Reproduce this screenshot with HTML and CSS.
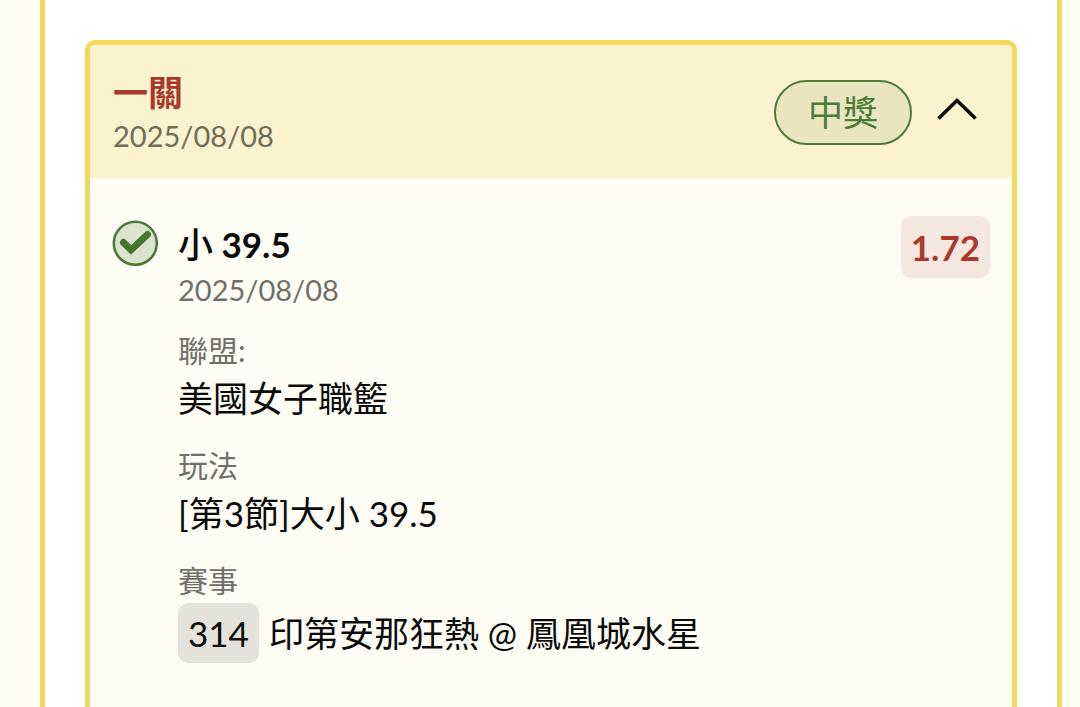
FILE: index.html
```html
<!DOCTYPE html>
<html lang="zh-Hant">
<head>
<meta charset="utf-8">
<meta name="viewport" content="width=device-width, initial-scale=1">
<title>一關 2025/08/08</title>
<link rel="stylesheet" href="styles.css">
</head>
<body>
<main class="panel">
  <article class="ticket">
    <header class="ticket-header">
      <div class="ticket-heading">
        <h1 class="ticket-title">一關</h1>
        <time class="date" datetime="2025-08-08">2025/08/08</time>
      </div>
      <span class="status">中獎</span>
      <button class="toggle" type="button" aria-expanded="true" aria-label="收合">
        <svg class="chevron" viewBox="0 0 40 24" aria-hidden="true"><path d="M1.500 21.500 20 3.500 38.500 21.500"/></svg>
      </button>
    </header>
    <section class="bet">
      <svg class="check" viewBox="0 0 46 46" role="img" aria-label="中獎">
        <circle cx="23.300" cy="23.300" r="21.500"/>
        <path d="M11.500 22.500 19 30 35.500 14.500"/>
      </svg>
      <div class="bet-main">
        <h2 class="bet-title"><span class="pick">小</span> 39.5</h2>
        <time class="date" datetime="2025-08-08">2025/08/08</time>
        <dl class="details">
          <div class="detail"><dt>聯盟:</dt><dd>美國女子職籃</dd></div>
          <div class="detail"><dt>玩法</dt><dd>[第3節]大小 39.5</dd></div>
          <div class="detail"><dt>賽事</dt><dd class="match"><span class="match-number">314</span><span>印第安那狂熱 @ 鳳凰城水星</span></dd></div>
        </dl>
      </div>
      <strong class="odds">1.72</strong>
    </section>
  </article>
</main>
</body>
</html>
```
FILE: styles.css
```css
* {
  box-sizing: border-box;
}

body {
  margin: 0;
  background: #fefdf5;
  color: #0b0b0b;
  font-family: Lato, "Noto Sans CJK TC", sans-serif;
  font-size: 35px;
  line-height: 50px;
}

h1, h2, dl, dd {
  margin: 0;
}

.panel {
  display: flex;
  min-height: 100vh;
  margin: 0 18px 0 40px;
  padding: 40px 40px 0;
  border: solid #f2d95c;
  border-width: 0 5px;
  background: #fff;
}

.ticket {
  flex: 1;
  border: 5px solid #f2d95c;
  border-bottom: 0;
  border-radius: 10px 10px 0 0;
  background: #fefdf5;
}

.ticket-header {
  display: flex;
  align-items: center;
  padding: 21px 30px 20px 23px;
  border-radius: 5px 5px 0 0;
  background: #fbf2cf;
}

.ticket-heading {
  flex: 1;
  padding-top: 4px;
}

.ticket-title {
  color: #a93a2b;
  font-size: 35px;
  font-weight: 700;
  line-height: 44px;
}

.date {
  display: block;
  color: #706f6a;
  font-size: 29px;
  line-height: 44px;
}

.ticket-header .date {
  color: #716c58;
}

.status {
  padding: 6px 32px;
  border: 2px solid #4d7a36;
  border-radius: 34px;
  background: #e9e5bf;
  color: #4a7a35;
  line-height: 49px;
}

.toggle {
  display: flex;
  margin-left: 20px;
  padding: 0 5px 7px;
  border: 0;
  background: none;
  cursor: pointer;
}

.chevron {
  width: 40px;
  height: 24px;
  fill: none;
  stroke: #0b0b0b;
  stroke-width: 3.500;
}

.bet {
  display: flex;
  align-items: flex-start;
  padding: 38px 22px 40px;
}

.check {
  flex: none;
  width: 46px;
  height: 46px;
  margin: 4px 20px 0 0;
}

.check circle {
  fill: #d9e3ce;
  stroke: #4c7837;
  stroke-width: 2.500;
}

.check path {
  fill: none;
  stroke: #45752f;
  stroke-width: 7;
  stroke-linecap: round;
}

.bet-main {
  flex: 1;
  padding-top: 4px;
}

.bet-title {
  font-size: 35px;
  font-weight: 700;
  line-height: 48px;
}

.pick {
  font-weight: 500;
}

.details {
  display: grid;
  gap: 20px;
  margin-top: 16px;
}

.detail dt {
  color: #706f6a;
  font-size: 30px;
  line-height: 45px;
}

.match {
  display: flex;
  align-items: center;
  gap: 10px;
}

.match-number {
  padding: 5px 10px;
  border-radius: 10px;
  background: #e3e3dc;
}

.odds {
  padding: 6px 10px;
  border-radius: 10px;
  background: #f4e7e0;
  color: #ab392b;
}
```
